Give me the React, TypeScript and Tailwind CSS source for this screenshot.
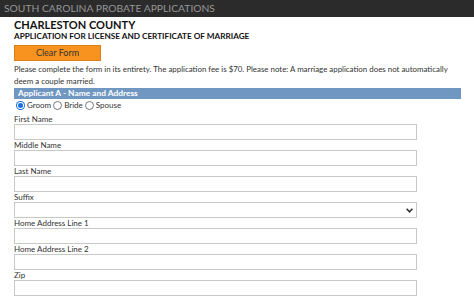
import React from "react";

const font = { fontFamily: 'Lato, "Open Sans", sans-serif' };

function Field({ label, select }: { label: string; select?: boolean }) {
  return (
    <div className="flex flex-col">
      <div className="h-[10px] text-[8px] leading-[10px] text-[#333] whitespace-nowrap">{label}</div>
      {select ? (
        <div className="h-[16px] w-[403px] border border-[#c8c8c8] bg-white flex items-center justify-end pr-[3px]">
          <svg width="7" height="5" viewBox="0 0 7 5">
            <path d="M0.6 0.8 L3.5 3.8 L6.4 0.8" stroke="#333" strokeWidth="1.6" fill="none" />
          </svg>
        </div>
      ) : (
        <div className="h-[16px] w-[403px] border border-[#c8c8c8] bg-white" />
      )}
    </div>
  );
}

function Radio({ checked, label }: { checked?: boolean; label: string }) {
  return (
    <div className="flex items-center gap-[2px]">
      {checked ? (
        <div className="w-[9px] h-[9px] rounded-full bg-[#1a6fe0] flex items-center justify-center">
          <div className="w-[7px] h-[7px] rounded-full bg-white flex items-center justify-center">
            <div className="w-[5px] h-[5px] rounded-full bg-[#1a6fe0]" />
          </div>
        </div>
      ) : (
        <div className="w-[9px] h-[9px] rounded-full border border-[#777] bg-white" />
      )}
      <span>{label}</span>
    </div>
  );
}

export default function App() {
  return (
    <div className="w-[474px] h-[296px] bg-white overflow-hidden" style={font}>
      <div className="h-[17px] bg-[#2b2b2b] flex items-center pl-[4px]">
        <span className="text-[10.3px] leading-[17px] text-[#969696] whitespace-nowrap">SOUTH CAROLINA PROBATE APPLICATIONS</span>
      </div>
      <div className="pl-[14px] pr-[13px]">
        <div className="h-[12px] text-[11px] leading-[12px] font-bold text-[#111] mt-[2px] whitespace-nowrap">CHARLESTON COUNTY</div>
        <div className="h-[11px] text-[8.2px] leading-[11px] font-bold text-[#111] whitespace-nowrap">APPLICATION FOR LICENSE AND CERTIFICATE OF MARRIAGE</div>
        <div className="mt-[3px] w-[87px] h-[16px] bg-[#f7931e] border border-[#d9801a] flex items-center justify-center text-[9px] leading-[14px] text-[#333]">
          Clear Form
        </div>
        <div className="h-[24px] text-[7.9px] leading-[12px] text-[#333] mt-[2px]">
          Please complete the form in its entirety. The application fee is $70. Please note: A marriage application does not automatically deem a couple married.
        </div>
        <div className="mt-[1px] h-[11px] bg-[#6f97c2] text-white font-bold text-[8.4px] leading-[11px] pl-[4px] whitespace-nowrap">
          Applicant A - Name and Address
        </div>
        <div className="h-[13px] flex items-center gap-[2px] text-[8px] leading-[13px] text-[#333] pl-[2px]">
          <Radio checked label="Groom" />
          <Radio label="Bride" />
          <Radio label="Spouse" />
        </div>
        <div className="flex flex-col mt-[2px]">
          <Field label="First Name" />
          <Field label="Middle Name" />
          <Field label="Last Name" />
          <Field label="Suffix" select />
          <Field label="Home Address Line 1" />
          <Field label="Home Address Line 2" />
          <Field label="Zip" />
        </div>
      </div>
    </div>
  );
}
